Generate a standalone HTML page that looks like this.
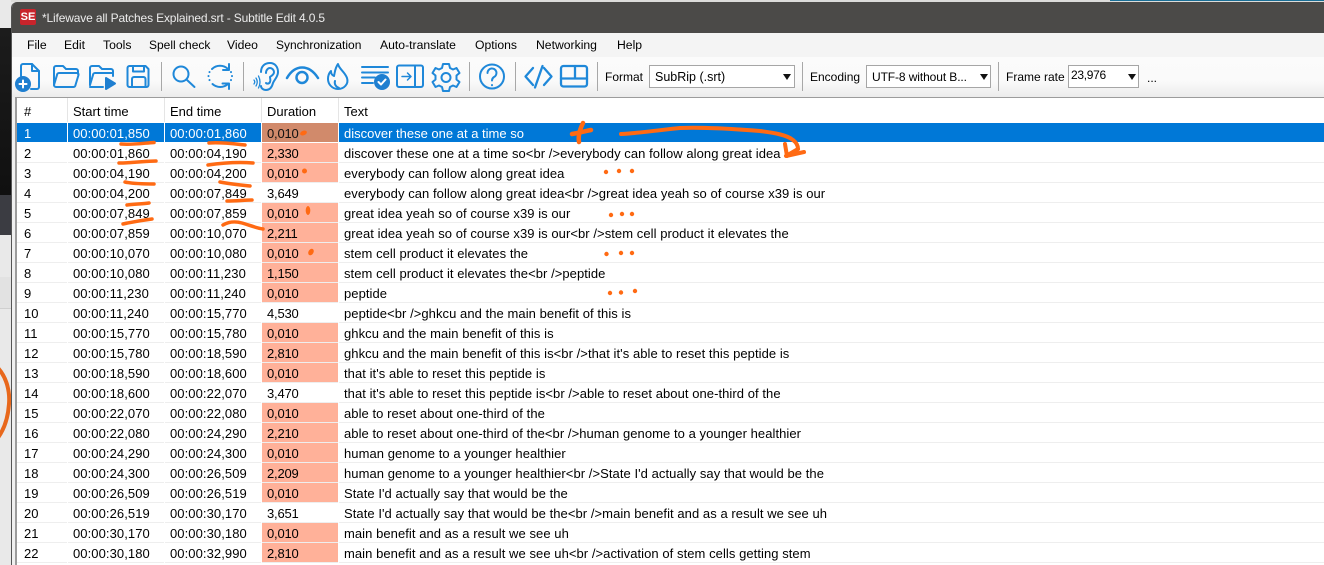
<!DOCTYPE html>
<html lang="en">
<head>
<meta charset="utf-8">
<title>Subtitle Edit</title>
<style>
html,body{margin:0;padding:0;width:1324px;height:565px;overflow:hidden;background:#e8e8e8;font-family:"Liberation Sans",sans-serif;font-size:13px;color:#000}
*{box-sizing:border-box}
.a{position:absolute}
.t{position:absolute;white-space:pre;line-height:16px}
.m{top:37px;font-size:12.2px}
.f{top:69px;font-size:12px}
#win{position:absolute;left:11px;top:2px;width:1313px;height:563px;background:#f0f0f0;border-left:1px solid #555;border-radius:6px 0 0 0;overflow:hidden}
#title{position:absolute;left:0;top:0;width:100%;height:31px;background:#4b4a48}
#menu{position:absolute;left:12px;top:33px;width:1312px;height:24px;background:#f4f4f4}
#tb{position:absolute;left:12px;top:57px;width:1312px;height:40px;background:linear-gradient(#fbfbfb,#fafafa 60%,#ececec)}
.sep{position:absolute;top:62px;width:1px;height:29px;background:#a8a8a8}
.combo{position:absolute;top:65px;height:23px;background:#fff;border:1px solid #a6a6a6}
.arr{position:absolute;top:74px;width:0;height:0;border-left:4.5px solid transparent;border-right:4.5px solid transparent;border-top:6px solid #111}
#list{position:absolute;left:15px;top:97px;width:1309px;height:468px;background:#fff;border-left:2px solid #9c9c9c;border-top:1px solid #9c9c9c;overflow:hidden}
.h{position:absolute;top:98px;width:1px;height:24px;background:#e5e5e5}
.row{position:absolute;left:17px;width:1307px;height:20px;border-bottom:1px solid #eeeeee}
.row span{position:absolute;top:3px;line-height:16px;white-space:pre}
.n{left:7px}
.s{left:56px;letter-spacing:.08px}
.e{left:153px;letter-spacing:.08px}
.d{left:245px;top:0!important;width:77px;height:19px;background:#ffb199;padding:3px 0 0 5px;letter-spacing:-.2px;line-height:16px}
.d.w{background:transparent}
.x{left:327px;letter-spacing:.06px}
.row.sel{background:#0078d7;border-bottom:1px solid #fff;color:#fff}
.row.sel .d{background:#d18a6b;color:#111}
.vl{position:absolute;top:123px;width:1px;height:442px;background:#fff}
svg{position:absolute;overflow:visible}
.ic{fill:none;stroke:#1f88d9;stroke-width:2;stroke-linecap:round;stroke-linejoin:round}
</style>
</head>
<body>
<!-- desktop behind -->
<div class="a" style="left:0;top:0;width:1324px;height:2px;background:#dcdcda"></div>
<div class="a" style="left:1110px;top:0;width:214px;height:1px;background:#1a6f96"></div>
<div class="a" style="left:0;top:0;width:11px;height:28px;background:#e9e9e9"></div>
<div class="a" style="left:0;top:28px;width:11px;height:167px;background:linear-gradient(#1c1c1c,#101010)"></div>
<div class="a" style="left:0;top:195px;width:11px;height:40px;background:#3b3c42"></div>
<div class="a" style="left:0;top:235px;width:11px;height:330px;background:#e9e9e9"></div>
<div class="a" style="left:0;top:277px;width:11px;height:32px;background:#e2e2e2;border-bottom:1px solid #cfcfcf"></div>
<svg style="left:0;top:0;width:11px;height:565px;overflow:hidden" viewBox="0 0 11 565"><path d="M-2 368C7 378 10 392 9 404C8 418 4 430-3 439" fill="none" stroke="#e8681c" stroke-width="4"/></svg>

<div id="win"><div id="title"></div></div>
<div id="menu"></div>
<div id="tb"></div>

<!-- title -->
<div class="a" style="left:20px;top:9px;width:16px;height:16px;background:#c8242b;border-radius:2px;color:#fff;font:bold 11px/16px 'Liberation Sans',sans-serif;text-align:center">SE</div>
<div class="t" style="left:42px;top:10px;color:#ececec;font-size:12px;letter-spacing:-.15px">*Lifewave all Patches Explained.srt - Subtitle Edit 4.0.5</div>

<!-- menu -->
<div class="t m" style="left:27px">File</div>
<div class="t m" style="left:64px">Edit</div>
<div class="t m" style="left:103px">Tools</div>
<div class="t m" style="left:149px;font-size:12px">Spell check</div>
<div class="t m" style="left:227px">Video</div>
<div class="t m" style="left:276px;font-size:12px">Synchronization</div>
<div class="t m" style="left:380px">Auto-translate</div>
<div class="t m" style="left:475px">Options</div>
<div class="t m" style="left:536px">Networking</div>
<div class="t m" style="left:617px">Help</div>

<!-- toolbar icons -->
<svg class="ic" style="left:0;top:0" width="1324" height="100" viewBox="0 0 1324 100">
  <!-- new -->
  <path d="M21 76V66a2 2 0 0 1 2-2h9l7 7v16a2 2 0 0 1-2 2h-6"/><path d="M32 64v7h7"/>
  <circle cx="23" cy="84" r="7" fill="#1f7fd0" stroke="#1f7fd0"/><path d="M23 80.500v7M19.500 84h7" stroke="#fff"/>
  <!-- open -->
  <path d="M54 85V68a2 2 0 0 1 2-2h7l3 3h10a2 2 0 0 1 2 2v3"/><path d="M54 85l3-10a2 2 0 0 1 2-2h18a1.500 1.500 0 0 1 1.500 2l-3 10a2 2 0 0 1-2 2H56a2 2 0 0 1-2-2z"/>
  <!-- open play -->
  <path d="M90 85V68a2 2 0 0 1 2-2h7l3 3h9a2 2 0 0 1 2 2v5"/><path d="M90 85l3-10a2 2 0 0 1 2-2h17"/><path d="M90 87h13"/>
  <path d="M106 78l9 5.500-9 5.500z" fill="#1f7fd0" stroke="#1f7fd0"/>
  <!-- save -->
  <path d="M127.500 68a2 2 0 0 1 2-2h16l3 3v16a2 2 0 0 1-2 2h-17a2 2 0 0 1-2-2z"/><path d="M133 66v5.500h11V66"/><path d="M132 87v-8a2 2 0 0 1 2-2h9.500a2 2 0 0 1 2 2v8"/>
  <!-- search -->
  <circle cx="181" cy="74" r="7.500"/><path d="M186.500 79.500L194.500 87"/>
  <!-- sync -->
  <path d="M212 69a11.500 11.500 0 0 1 16 0"/><path d="M229 64v6h-6"/><path d="M212.500 84a11.500 11.500 0 0 0 15.500 0"/><path d="M222.500 83.500h6.500V89"/>
  <path d="M209.500 72v.1M208.500 76v.1M209.500 80v.1M231 72v.1M232 76v.1M231 80v.1"/>
  <!-- ear -->
  <path d="M261 72C261 66 265 63 270 63C275 63 278 67 278 72C278 77 274 80 273 83C272 87 270 90 266 90C263 90 261 88 261 86"/>
  <path d="M266 73C266 70 268 68 270 68C272 68 274 70 274 72C274 75 271 76 270 77C270 79 271 80 270 82C269 84 267 84 266 83"/>
  <path d="M254 80q1.500 2 0 4M256 78q2.500 4 0 8M258.500 76q3 6 0 12" stroke-width="1.300"/>
  <!-- eye -->
  <path d="M287 78C295 64 309 64 318 78" stroke-width="2.500"/><circle cx="302" cy="77.500" r="5.500" stroke-width="2.500"/>
  <!-- flame -->
  <path d="M338 64c1 5 7 8 9 14 2 6-3 11-9 11s-10-5-10-10c0-3 1-6 3-8 0 3 1 4 3 5 1-4 1-8 4-12z"/><path d="M339 88c-3-1-5-4-4-7"/>
  <!-- list check -->
  <path d="M362 67h26M362 72.500h26M362 77.500h13M362 83h11"/>
  <circle cx="382" cy="82" r="7" fill="#1f7fd0" stroke="#1f7fd0"/><path d="M378.500 82l2.500 2.500 4.500-5" stroke="#fff"/>
  <!-- import box -->
  <rect x="397" y="65.500" width="26" height="21.500" rx="2"/><path d="M415 65.500v21.500"/><path d="M402 76.500h9M407.500 73l3.500 3.500-3.500 3.500" stroke-width="1.500"/>
  <!-- gear -->
  <path d="M443 64h6l1 4 3 1.500 3.500-1.500 3 5-3 2.500v4l3 2.500-3 5-3.500-1.500-3 1.500-1 4h-6l-1-4-3-1.500-3.500 1.500-3-5 3-2.500v-4l-3-2.500 3-5 3.500 1.500 3-1.500z"/><circle cx="446" cy="77.500" r="4.500"/>
  <!-- help -->
  <circle cx="492" cy="76.500" r="12"/><path d="M487.500 73a4.500 4.500 0 1 1 6.500 4c-1.500 1-2 1.700-2 3.500"/><path d="M492 85v.2"/>
  <!-- code -->
  <path d="M533 68L525.500 76.500L533 85M544 68L551.500 76.500L544 85M542.500 66L535 87.500" stroke-width="2.300"/>
  <!-- layout -->
  <rect x="561" y="66" width="26" height="20.500" rx="2.500" stroke-width="2.300"/><path d="M561 78.500h26M575 66v12.500" stroke-width="2.300"/>
</svg>

<div class="sep" style="left:161px"></div>
<div class="sep" style="left:243px"></div>
<div class="sep" style="left:469px"></div>
<div class="sep" style="left:515px"></div>
<div class="sep" style="left:597px"></div>
<div class="sep" style="left:802px"></div>
<div class="sep" style="left:998px"></div>

<div class="t f" style="left:605px">Format</div>
<div class="combo" style="left:649px;width:146px"></div>
<div class="t f" style="left:655px;font-size:12.500px">SubRip (.srt)</div>
<div class="arr" style="left:783px"></div>
<div class="t f" style="left:810px">Encoding</div>
<div class="combo" style="left:866px;width:125px"></div>
<div class="t f" style="left:872px;letter-spacing:-.1px">UTF-8 without B...</div>
<div class="arr" style="left:980px"></div>
<div class="t f" style="left:1006px">Frame rate</div>
<div class="combo" style="left:1068px;width:71px"></div>
<div class="t" style="left:1071px;top:67px;font-size:12px;letter-spacing:-.3px">23,976</div>
<div class="arr" style="left:1128px"></div>
<div class="t f" style="left:1147px;top:70px">...</div>

<!-- list -->
<div id="list"></div>
<div class="h" style="left:67px"></div>
<div class="h" style="left:164px"></div>
<div class="h" style="left:261px"></div>
<div class="h" style="left:338px"></div>
<div class="t" style="left:24px;top:104px">#</div>
<div class="t" style="left:73px;top:104px">Start time</div>
<div class="t" style="left:170px;top:104px">End time</div>
<div class="t" style="left:267px;top:104px">Duration</div>
<div class="t" style="left:344px;top:104px">Text</div>

<div class="row sel" style="top:123px"><span class="n">1</span><span class="s">00:00:01,850</span><span class="e">00:00:01,860</span><span class="d">0,010</span><span class="x" style="letter-spacing:0">discover these one at a time so</span></div>
<div class="row" style="top:143px"><span class="n">2</span><span class="s">00:00:01,860</span><span class="e">00:00:04,190</span><span class="d">2,330</span><span class="x">discover these one at a time so&lt;br /&gt;everybody can follow along great idea</span></div>
<div class="row" style="top:163px"><span class="n">3</span><span class="s">00:00:04,190</span><span class="e">00:00:04,200</span><span class="d">0,010</span><span class="x">everybody can follow along great idea</span></div>
<div class="row" style="top:183px"><span class="n">4</span><span class="s">00:00:04,200</span><span class="e">00:00:07,849</span><span class="d w">3,649</span><span class="x">everybody can follow along great idea&lt;br /&gt;great idea yeah so of course x39 is our</span></div>
<div class="row" style="top:203px"><span class="n">5</span><span class="s">00:00:07,849</span><span class="e">00:00:07,859</span><span class="d">0,010</span><span class="x">great idea yeah so of course x39 is our</span></div>
<div class="row" style="top:223px"><span class="n">6</span><span class="s">00:00:07,859</span><span class="e">00:00:10,070</span><span class="d">2,211</span><span class="x">great idea yeah so of course x39 is our&lt;br /&gt;stem cell product it elevates the</span></div>
<div class="row" style="top:243px"><span class="n">7</span><span class="s">00:00:10,070</span><span class="e">00:00:10,080</span><span class="d">0,010</span><span class="x">stem cell product it elevates the</span></div>
<div class="row" style="top:263px"><span class="n">8</span><span class="s">00:00:10,080</span><span class="e">00:00:11,230</span><span class="d">1,150</span><span class="x">stem cell product it elevates the&lt;br /&gt;peptide</span></div>
<div class="row" style="top:283px"><span class="n">9</span><span class="s">00:00:11,230</span><span class="e">00:00:11,240</span><span class="d">0,010</span><span class="x">peptide</span></div>
<div class="row" style="top:303px"><span class="n">10</span><span class="s">00:00:11,240</span><span class="e">00:00:15,770</span><span class="d w">4,530</span><span class="x">peptide&lt;br /&gt;ghkcu and the main benefit of this is</span></div>
<div class="row" style="top:323px"><span class="n">11</span><span class="s">00:00:15,770</span><span class="e">00:00:15,780</span><span class="d">0,010</span><span class="x">ghkcu and the main benefit of this is</span></div>
<div class="row" style="top:343px"><span class="n">12</span><span class="s">00:00:15,780</span><span class="e">00:00:18,590</span><span class="d">2,810</span><span class="x">ghkcu and the main benefit of this is&lt;br /&gt;that it's able to reset this peptide is</span></div>
<div class="row" style="top:363px"><span class="n">13</span><span class="s">00:00:18,590</span><span class="e">00:00:18,600</span><span class="d">0,010</span><span class="x">that it's able to reset this peptide is</span></div>
<div class="row" style="top:383px"><span class="n">14</span><span class="s">00:00:18,600</span><span class="e">00:00:22,070</span><span class="d w">3,470</span><span class="x">that it's able to reset this peptide is&lt;br /&gt;able to reset about one-third of the</span></div>
<div class="row" style="top:403px"><span class="n">15</span><span class="s">00:00:22,070</span><span class="e">00:00:22,080</span><span class="d">0,010</span><span class="x">able to reset about one-third of the</span></div>
<div class="row" style="top:423px"><span class="n">16</span><span class="s">00:00:22,080</span><span class="e">00:00:24,290</span><span class="d">2,210</span><span class="x">able to reset about one-third of the&lt;br /&gt;human genome to a younger healthier</span></div>
<div class="row" style="top:443px"><span class="n">17</span><span class="s">00:00:24,290</span><span class="e">00:00:24,300</span><span class="d">0,010</span><span class="x">human genome to a younger healthier</span></div>
<div class="row" style="top:463px"><span class="n">18</span><span class="s">00:00:24,300</span><span class="e">00:00:26,509</span><span class="d">2,209</span><span class="x">human genome to a younger healthier&lt;br /&gt;State I'd actually say that would be the</span></div>
<div class="row" style="top:483px"><span class="n">19</span><span class="s">00:00:26,509</span><span class="e">00:00:26,519</span><span class="d">0,010</span><span class="x">State I'd actually say that would be the</span></div>
<div class="row" style="top:503px"><span class="n">20</span><span class="s">00:00:26,519</span><span class="e">00:00:30,170</span><span class="d w">3,651</span><span class="x">State I'd actually say that would be the&lt;br /&gt;main benefit and as a result we see uh</span></div>
<div class="row" style="top:523px"><span class="n">21</span><span class="s">00:00:30,170</span><span class="e">00:00:30,180</span><span class="d">0,010</span><span class="x">main benefit and as a result we see uh</span></div>
<div class="row" style="top:543px"><span class="n">22</span><span class="s">00:00:30,180</span><span class="e">00:00:32,990</span><span class="d">2,810</span><span class="x">main benefit and as a result we see uh&lt;br /&gt;activation of stem cells getting stem</span></div>

<div class="vl" style="left:67px"></div>
<div class="vl" style="left:164px"></div>
<div class="vl" style="left:261px"></div>
<div class="vl" style="left:338px"></div>

<!-- annotations -->
<svg style="left:0;top:0" width="1324" height="565" viewBox="0 0 1324 565" fill="none" stroke="#ff6a13" stroke-linecap="round" stroke-linejoin="round">
  <g stroke-width="3.500">
    <path d="M121 144C132 145 145 143 154 142.500"/>
    <path d="M209 143C222 142 235 144 245 145"/>
    <path d="M119 163C132 163 146 161 156 161"/>
    <path d="M208 165C222 163 240 162 253 163"/>
    <path d="M125 182C134 184 146 184 154 184"/>
    <path d="M220 182C230 184 240 185 250 186"/>
    <path d="M127 205C135 204 143 204 149 203"/>
    <path d="M227 201C236 201 245 200 252 200"/>
    <path d="M123 224C132 222 144 220 152 219"/>
    <path d="M223 225C228 222 235 221 242 223C249 225 256 228 263 229"/>
  </g>
  <g fill="#ff6a13" stroke="none">
    <ellipse cx="303.500" cy="133" rx="3.500" ry="2.300" transform="rotate(-20 303.500 133)"/>
    <circle cx="304.500" cy="171" r="2.500"/>
    <ellipse cx="308" cy="210.500" rx="2.300" ry="4.500"/>
    <ellipse cx="311" cy="252" rx="2.500" ry="3.500" transform="rotate(30 311 252)"/>
    <circle cx="606" cy="172" r="2.200"/><circle cx="619" cy="171" r="2.200"/><circle cx="632" cy="171" r="2.200"/>
    <circle cx="611" cy="215" r="2.200"/><circle cx="622" cy="214" r="2.200"/><circle cx="632" cy="214" r="2.200"/>
    <circle cx="606.500" cy="254" r="2.200"/><circle cx="621" cy="253" r="2.200"/><circle cx="632" cy="253" r="2.200"/>
    <circle cx="610" cy="293" r="2.200"/><circle cx="621" cy="292.500" r="2.200"/><circle cx="635" cy="291" r="2.200"/>
  </g>
  <g stroke-width="4.500">
    <path d="M572 134C578 133 586 131 591 130"/>
    <path d="M583 123C580 129 578 136 579 142"/>
  </g>
  <g stroke-width="4">
    <path d="M621 134C640 133 660 130 680 128C705 127 735 129 760 131C775 133 787 135 793 140C797 143 798 146 798 149"/>
    <path d="M798 149L786 156L804 152"/>
    <path d="M785 144L787 156"/>
  </g>
</svg>
</body>
</html>
